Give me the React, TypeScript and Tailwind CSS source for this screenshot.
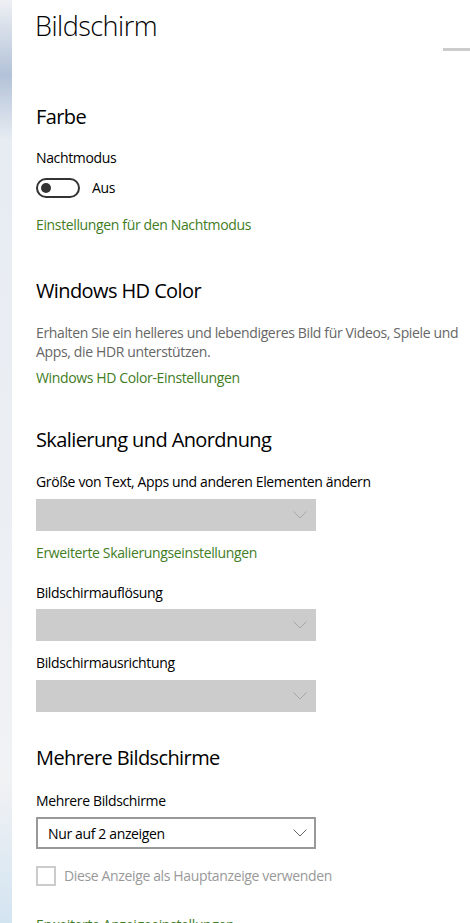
const font = { fontFamily: '"Open Sans", "Noto Sans", sans-serif' }

function Chevron({ color }: { color: string }) {
  return (
    <svg width="14" height="8" viewBox="0 0 14 8" fill="none">
      <path d="M0.5 0.5 L7 7 L13.5 0.5" stroke={color} strokeWidth="1" />
    </svg>
  )
}

function Link({ children }: { children: React.ReactNode }) {
  return <div className="text-[14px] leading-[20px] tracking-[-0.36px] text-[#427d1f]">{children}</div>
}

function Heading({ children }: { children: React.ReactNode }) {
  return <h2 className="text-[20px] leading-[28px] tracking-[-0.6px] text-black font-normal">{children}</h2>
}

function Label({ children }: { children: React.ReactNode }) {
  return <div className="text-[14px] leading-[20px] tracking-[-0.36px] text-black">{children}</div>
}

function DisabledSelect() {
  return (
    <div className="w-[280px] h-[32px] bg-[#cccccc] flex items-center justify-end pr-[9px]">
      <Chevron color="#a6a6a6" />
    </div>
  )
}

export default function App() {
  return (
    <div className="flex min-h-[923px] bg-white" style={font}>
      <div className="w-[12px] shrink-0 bg-[linear-gradient(to_bottom,#eef0f4_0px,#b3c2d8_75px,#e7ecf2_140px,#ebeff4_500px,#f1f2f4_780px,#d3e4f1_923px)]" />
      <div className="flex-1 pl-[24px] overflow-hidden">
        <div className="flex items-start justify-between h-[103px]">
          <h1 className="text-[27px] leading-[36px] font-light tracking-[-0.5px] text-black mt-[8px] -ml-[1px]">Bildschirm</h1>
          <div className="w-[27px] h-[3px] bg-[#cccccc] mt-[48px]" />
        </div>

        <Heading>Farbe</Heading>
        <div className="mt-[17px]"><Label>Nachtmodus</Label></div>
        <div className="flex items-center gap-[12px] mt-[9px]">
          <div className="w-[44px] h-[20px] rounded-full border-2 border-[#333333] flex items-center pl-[3px]">
            <div className="w-[10px] h-[10px] rounded-full bg-[#333333]" />
          </div>
          <span className="text-[14px] tracking-[-0.36px] text-black">Aus</span>
        </div>
        <div className="mt-[17px]"><Link>Einstellungen für den Nachtmodus</Link></div>

        <div className="mt-[42px]"><Heading>Windows HD Color</Heading></div>
        <p className="mt-[18px] text-[14px] leading-[19px] tracking-[-0.36px] text-[#666666]">
          Erhalten Sie ein helleres und lebendigeres Bild für Videos, Spiele und Apps, die HDR unterstützen.
        </p>
        <div className="mt-[7px]"><Link>Windows HD Color-Einstellungen</Link></div>

        <div className="mt-[38px]"><Heading>Skalierung und Anordnung</Heading></div>
        <div className="mt-[18px]"><Label>Größe von Text, Apps und anderen Elementen ändern</Label></div>
        <div className="mt-[7px]"><DisabledSelect /></div>
        <div className="mt-[12px]"><Link>Erweiterte Skalierungseinstellungen</Link></div>
        <div className="mt-[20px]"><Label>Bildschirmauflösung</Label></div>
        <div className="mt-[6px]"><DisabledSelect /></div>
        <div className="mt-[12px]"><Label>Bildschirmausrichtung</Label></div>
        <div className="mt-[7px]"><DisabledSelect /></div>

        <div className="mt-[32px]"><Heading>Mehrere Bildschirme</Heading></div>
        <div className="mt-[19px]"><Label>Mehrere Bildschirme</Label></div>
        <div className="mt-[6px] w-[280px] h-[32px] border-2 border-[#999999] flex items-center justify-between pl-[10px] pr-[7px]">
          <span className="text-[14px] tracking-[-0.36px] text-black">Nur auf 2 anzeigen</span>
          <Chevron color="#666666" />
        </div>
        <label className="mt-[16px] flex items-center gap-[8px]">
          <span className="w-[20px] h-[20px] border-2 border-[#cccccc]" />
          <span className="text-[14px] tracking-[-0.36px] text-[#999999]">Diese Anzeige als Hauptanzeige verwenden</span>
        </label>
        <div className="mt-[29px]"><Link>Erweiterte Anzeigeeinstellungen</Link></div>
      </div>
    </div>
  )
}
